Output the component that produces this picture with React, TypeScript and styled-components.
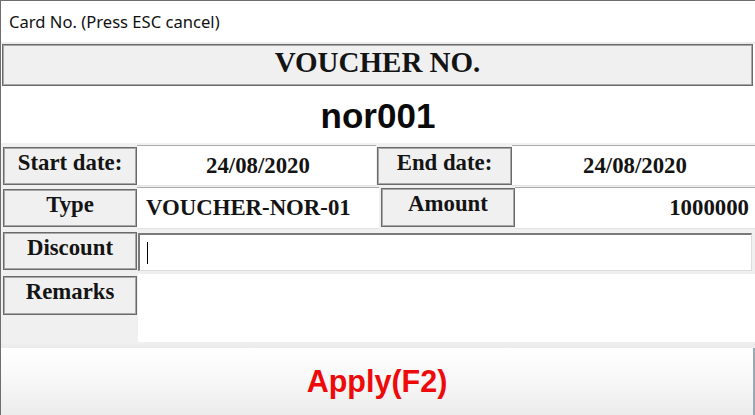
import React from "react";
import styled, { createGlobalStyle } from "styled-components";

const Global = createGlobalStyle`
  html, body { margin: 0; padding: 0; background: #ffffff; }
  #root { width: 755px; height: 415px; }
`;

const Window = styled.div`
  width: 755px;
  height: 415px;
  box-sizing: border-box;
  border-left: 1px solid #6e6e6e;
  border-top: 1px solid #6e6e6e;
  background: #ffffff;
  display: flex;
  flex-direction: column;
  overflow: hidden;
`;

const TitleBar = styled.div`
  height: 41px;
  flex: none;
  display: flex;
  align-items: center;
  padding-left: 8px;
  font-family: "Noto Sans", "Open Sans", sans-serif;
  font-size: 16.6px;
  color: #111;
  border-bottom: 2px solid #ececec;
`;

const HeaderBox = styled.div`
  flex: none;
  margin: 0 2px 0 1px;
  height: 42px;
  box-sizing: border-box;
  background: #f0f0f0;
  border: 1px solid #6a6a6a;
  box-shadow: inset 0 0 0 1px #a8a8a8;
  display: flex;
  align-items: center;
  justify-content: center;
  font-family: "Liberation Serif", serif;
  font-weight: bold;
  font-size: 29px;
  color: #141414;
  padding-bottom: 6px;
`;

const VoucherNo = styled.div`
  flex: none;
  height: 57px;
  display: flex;
  align-items: center;
  justify-content: center;
  font-family: "Liberation Sans", Arial, sans-serif;
  font-weight: bold;
  font-size: 35px;
  color: #0a0a0a;
  padding-top: 2px;
  box-sizing: border-box;
`;

const Form = styled.div`
  flex: none;
  height: 201px;
  background: #f0f0f0;
  display: flex;
  flex-direction: column;
`;

const Row = styled.div<{ $h: number }>`
  height: ${(p) => p.$h}px;
  flex: none;
  display: flex;
  align-items: flex-start;
`;

const Label = styled.div<{ $w?: number; $top: number; $h?: number; $ml?: number }>`
  width: ${(p) => p.$w ?? 134}px;
  height: ${(p) => p.$h ?? 38}px;
  margin-top: ${(p) => p.$top}px;
  margin-left: ${(p) => p.$ml ?? 2}px;
  flex: none;
  box-sizing: border-box;
  background: #f0f0f0;
  border: 1px solid #6a6a6a;
  box-shadow: inset 0 0 0 1px #a8a8a8;
  text-align: center;
  font-family: "Liberation Serif", serif;
  font-weight: bold;
  font-size: 22.8px;
  line-height: 28px;
  padding-top: 1px;
  color: #141414;
  white-space: nowrap;
`;

const Value = styled.div<{ $w?: number; $align?: string; $top: number; $h: number }>`
  ${(p) => (p.$w ? `width: ${p.$w}px; flex: none;` : "flex: 1;")}
  height: ${(p) => p.$h}px;
  margin-top: ${(p) => p.$top}px;
  box-sizing: border-box;
  background: #ffffff;
  border-top: 1px solid #a9a9a9;
  border-bottom: 1px solid #e2e2e2;
  display: flex;
  align-items: center;
  justify-content: ${(p) => p.$align ?? "center"};
  padding: 0 ${(p) => (p.$align === "flex-end" ? "6px" : "0")} 0 ${(p) => (p.$align === "flex-start" ? "9px" : p.$align === "flex-end" ? "0" : "3px")};
  font-family: "Liberation Serif", serif;
  font-weight: bold;
  font-size: 22.8px;
  color: #141414;
`;

const Input = styled.div`
  flex: none;
  width: 614px;
  height: 38px;
  margin-top: 3px;
  margin-left: 1px;
  box-sizing: border-box;
  background: #fff;
  border-top: 2px solid #7a7a7a;
  border-left: 2px solid #7a7a7a;
  border-right: 1px solid #dcdcdc;
  border-bottom: 1px solid #dcdcdc;
  display: flex;
  align-items: center;
  padding-left: 7px;
`;

const Caret = styled.div`
  width: 1px;
  height: 22px;
  background: #000;
`;

const Remarks = styled.div`
  flex: 1;
  height: 68px;
  margin-left: 1px;
  background: #fff;
`;

const Band = styled.div`
  flex: none;
  height: 4px;
  background: #ececec;
`;

const ApplyButton = styled.button`
  flex: none;
  height: 67px;
  width: 100%;
  margin: 0;
  border: none;
  border-right: 2px solid #9aa8b0;
  background: linear-gradient(#ffffff, #f7f7f7 50%, #ececec);
  font-family: "Liberation Sans", Arial, sans-serif;
  font-weight: bold;
  font-size: 30.5px;
  color: #ee0a0a;
  padding-bottom: 2px;
  cursor: pointer;
`;

export default function App() {
  return (
    <>
      <Global />
      <Window>
        <TitleBar>Card No. (Press ESC cancel)</TitleBar>
        <HeaderBox>VOUCHER NO.</HeaderBox>
        <VoucherNo>nor001</VoucherNo>
        <Form>
          <Row $h={43}>
            <Label $top={4}>Start date:</Label>
            <Value $w={239} $top={2} $h={41}>24/08/2020</Value>
            <Label $top={4} $ml={1} $w={135}>End date:</Label>
            <Value $top={2} $h={41}>24/08/2020</Value>
          </Row>
          <Row $h={44}>
            <Label $top={3}>Type</Label>
            <Value $w={242} $align="flex-start" $top={1} $h={42}>VOUCHER-NOR-01</Value>
            <Label $top={2} $ml={2} $w={134} $h={39}>Amount</Label>
            <Value $align="flex-end" $top={1} $h={42}>1000000</Value>
          </Row>
          <Row $h={44}>
            <Label $top={2}>Discount</Label>
            <Input>
              <Caret />
            </Input>
          </Row>
          <Row $h={70}>
            <Label $top={2} $h={39}>Remarks</Label>
            <Remarks />
          </Row>
        </Form>
        <Band />
        <ApplyButton>Apply(F2)</ApplyButton>
      </Window>
    </>
  );
}
